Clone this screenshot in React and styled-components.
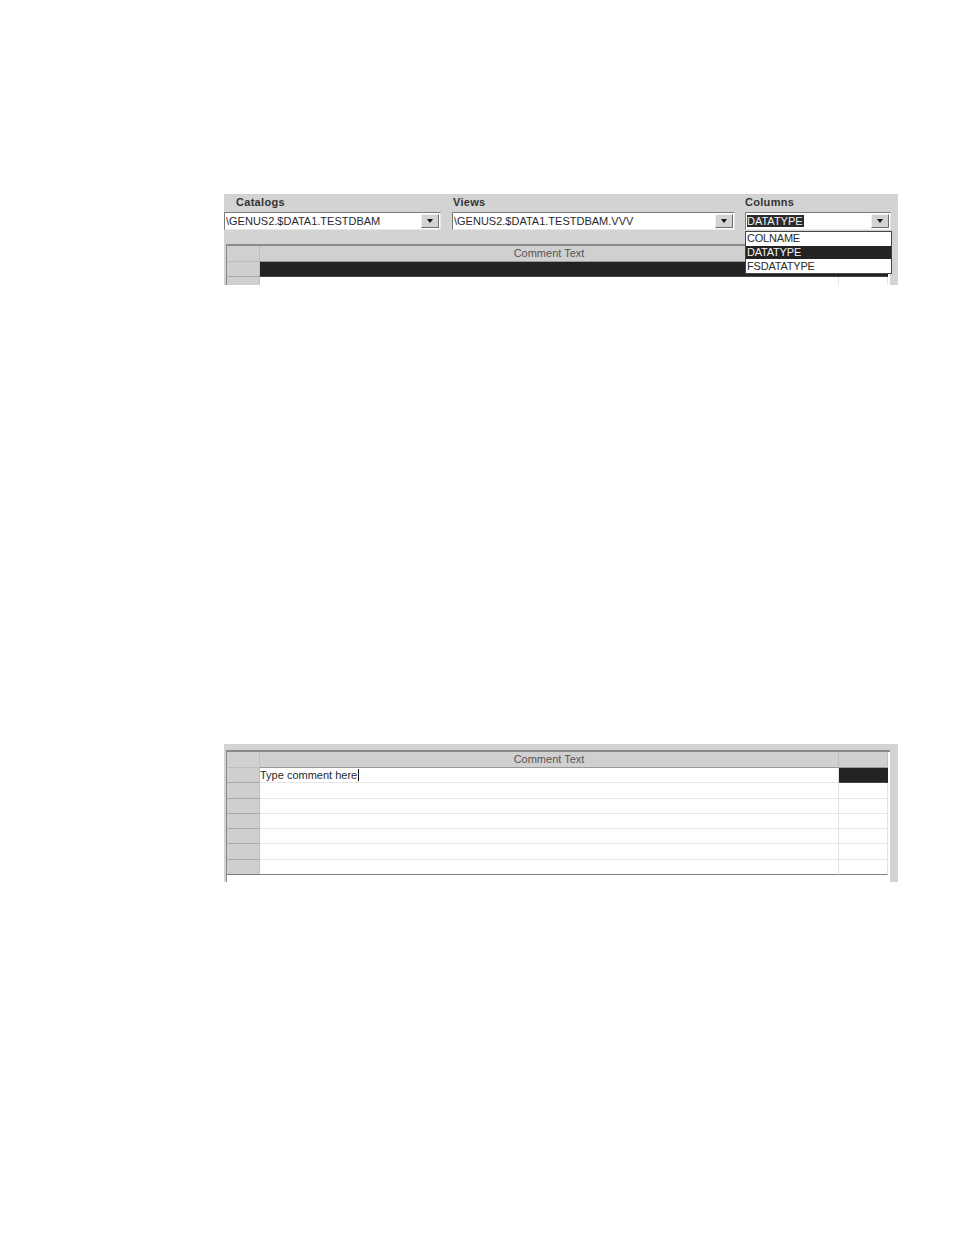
import React from "react";
import styled, { createGlobalStyle } from "styled-components";

const GlobalStyle = createGlobalStyle`
  html, body {
    margin: 0;
    padding: 0;
    background: #ffffff;
  }
  body {
    font-family: "Liberation Sans", Arial, sans-serif;
    font-size: 11px;
    color: #222;
  }
`;

const Page = styled.div`
  width: 954px;
  height: 1235px;
  padding: 194px 0 0 224px;
  box-sizing: border-box;
  display: flex;
  flex-direction: column;
  gap: 459px;
`;

const Panel = styled.section`
  position: relative;
  width: 674px;
  height: ${(p) => p.height}px;
  background: #d3d3d3;
  box-sizing: border-box;
  padding: ${(p) => p.padTop}px 0 0 2px;
  overflow: hidden;
`;

const Toolbar = styled.div`
  display: flex;
  margin: -${(p) => p.padTop}px 0 14px -2px;
`;

const Field = styled.div`
  width: ${(p) => p.width}px;
  margin-right: ${(p) => p.gap || 0}px;
  display: flex;
  flex-direction: column;
`;

const Label = styled.div`
  height: 18px;
  line-height: 17px;
  padding-left: ${(p) => p.indent || 0}px;
  font-weight: bold;
  font-size: 11px;
  color: #333;
  letter-spacing: 0.3px;
`;

const Combo = styled.div`
  height: 18px;
  box-sizing: border-box;
  border: 1px solid #7a7a7a;
  border-right-color: #e8e8e8;
  border-bottom-color: #e8e8e8;
  background: #fff;
  display: flex;
  align-items: center;
  padding-left: 1px;
  padding-right: 1px;
`;

const ComboText = styled.span`
  flex: 1;
  font-size: 11px;
  letter-spacing: 0;
  color: #2a2a2a;
  white-space: nowrap;
  overflow: hidden;
`;

const Selected = styled.span`
  background: #2b2b2b;
  color: #f4f4f4;
  padding: 0 1px 0 0;
  line-height: 13px;
`;

const DropButton = styled.div`
  width: 18px;
  height: 14px;
  box-sizing: border-box;
  background: #d3d3d3;
  border: 1px solid #f2f2f2;
  border-right-color: #6e6e6e;
  border-bottom-color: #6e6e6e;
  display: flex;
  align-items: center;
  justify-content: center;
`;

const Arrow = styled.span`
  width: 0;
  height: 0;
  border-left: 3.5px solid transparent;
  border-right: 3.5px solid transparent;
  border-top: 4px solid #111;
`;

const DropList = styled.ul`
  position: absolute;
  top: 37px;
  left: 521px;
  width: 147px;
  margin: 0;
  padding: 0;
  list-style: none;
  background: #fff;
  border: 1px solid #444;
  box-sizing: border-box;
  z-index: 2;
`;

const DropItem = styled.li`
  height: 13px;
  line-height: 13px;
  padding-left: 1px;
  font-size: 11px;
  letter-spacing: -0.2px;
  color: ${(p) => (p.active ? "#f4f4f4" : "#2a2a2a")};
  background: ${(p) => (p.active ? "#232323" : "#fff")};
  border-top: ${(p) => (p.first ? "none" : "1px solid #fff")};
`;

const Grid = styled.div`
  width: 664px;
  background: #fff;
  border-left: 1px solid #8a8a8a;
  border-top: 2px solid #8a8a8a;
  box-sizing: border-box;
  display: grid;
  grid-template-columns: 33px 579px 49px;
  grid-auto-rows: ${(p) => p.rowH}px;
  grid-template-rows: 16px;
  min-height: ${(p) => p.minH || 0}px;
  align-content: start;
`;

const Corner = styled.div`
  background: #d0d0d0;
  border-right: 1px solid #bdbdbd;
  border-bottom: 1px solid #bdbdbd;
`;

const HeadCell = styled.div`
  background: #d0d0d0;
  border-right: 1px solid #bdbdbd;
  border-bottom: 1px solid #9a9a9a;
  text-align: center;
  line-height: 15px;
  font-size: 11px;
  letter-spacing: 0;
  color: #555;
`;

const RowHead = styled.div`
  background: #cfcfcf;
  border-right: 1px solid #bdbdbd;
  border-bottom: 1px solid ${(p) => (p.last ? "#7e7e7e" : "#a8a8a8")};
`;

const Cell = styled.div`
  background: ${(p) => (p.dark ? "#232323" : "#fff")};
  border-right: 1px solid ${(p) => (p.dark ? "#232323" : "#e2e2e2")};
  border-bottom: 1px solid ${(p) => (p.last ? "#7e7e7e" : p.dark ? "#444" : "#e6e6e6")};
  font-size: 11px;
  letter-spacing: 0;
  line-height: 14px;
  color: #2a2a2a;
  white-space: nowrap;
  overflow: hidden;
`;

const Caret = styled.span`
  display: inline-block;
  width: 1px;
  height: 12px;
  background: #111;
  vertical-align: -2px;
  margin-left: 1px;
`;

function ComboBox({ children }) {
  return (
    <Combo>
      <ComboText>{children}</ComboText>
      <DropButton>
        <Arrow />
      </DropButton>
    </Combo>
  );
}

export default function App() {
  const rows = [0, 1, 2, 3, 4, 5, 6];

  return (
    <>
      <GlobalStyle />
      <Page>
        <Panel height={91} padTop={50}>
          <Toolbar padTop={50}>
            <Field width={217} gap={11}>
              <Label indent={12}>Catalogs</Label>
              <ComboBox>\GENUS2.$DATA1.TESTDBAM</ComboBox>
            </Field>
            <Field width={283} gap={10}>
              <Label indent={1}>Views</Label>
              <ComboBox>\GENUS2.$DATA1.TESTDBAM.VVV</ComboBox>
            </Field>
            <Field width={146}>
              <Label>Columns</Label>
              <ComboBox>
                <Selected>DATATYPE</Selected>
              </ComboBox>
            </Field>
          </Toolbar>
          <Grid rowH={15}>
            <Corner />
            <HeadCell>Comment Text</HeadCell>
            <HeadCell />
            <RowHead />
            <Cell dark />
            <Cell dark />
            <RowHead />
            <Cell />
            <Cell />
          </Grid>
          <DropList>
            <DropItem first>COLNAME</DropItem>
            <DropItem active>DATATYPE</DropItem>
            <DropItem>FSDATATYPE</DropItem>
          </DropList>
        </Panel>

        <Panel height={138} padTop={6}>
          <Grid rowH={15.3} minH={132}>
            <Corner />
            <HeadCell>Comment Text</HeadCell>
            <HeadCell />
            {rows.map((r) => (
              <React.Fragment key={r}>
                <RowHead last={r === rows.length - 1} />
                <Cell last={r === rows.length - 1}>
                  {r === 0 && (
                    <>
                      Type comment here
                      <Caret />
                    </>
                  )}
                </Cell>
                <Cell dark={r === 0} last={r === rows.length - 1} />
              </React.Fragment>
            ))}
          </Grid>
        </Panel>
      </Page>
    </>
  );
}
